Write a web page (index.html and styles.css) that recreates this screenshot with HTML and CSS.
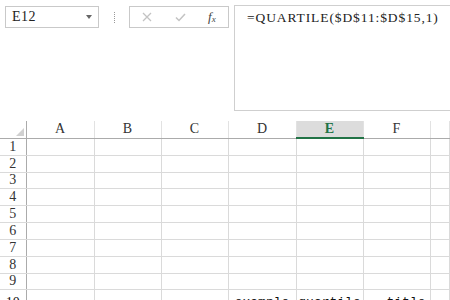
FILE: index.html
```html
<!DOCTYPE html>
<html lang="en">
<head>
    <meta charset="UTF-8">
    <title>Sheet</title>
    <link rel="stylesheet" href="styles.css">
</head>
<body>
    <!-- Bar di atas: name box, tombol, formula -->
    <div class="top">
        <div class="namebox">
            <span>E12</span>
            <span class="arrow"></span>
        </div>
        <div class="dots"></div>
        <div class="btns">
            <svg width="10" height="10" viewBox="0 0 10 10"><path d="M1 1L9 9M9 1L1 9" stroke="#c3c3c3" stroke-width="1.3" fill="none"/></svg>
            <svg width="11" height="9" viewBox="0 0 11 9"><path d="M1 4.5L4 7.5L10 1" stroke="#c3c3c3" stroke-width="1.5" fill="none"/></svg>
            <span class="fx">f<sub>x</sub></span>
        </div>
        <div class="formula">=QUARTILE($D$11:$D$15,1)</div>
    </div>

    <!-- Lembar kerja -->
    <table class="sheet">
        <colgroup>
            <col style="width:26px"><col style="width:68px"><col style="width:67px"><col style="width:67px">
            <col style="width:68px"><col style="width:67px"><col style="width:67px"><col>
        </colgroup>
        <tr class="head">
            <th class="corner"><svg width="8" height="8" viewBox="0 0 8 8"><polygon points="8,0 8,8 0,8" fill="#d0d0d0"/></svg></th>
            <th>A</th><th>B</th><th>C</th><th>D</th><th class="active">E</th><th>F</th><th></th>
        </tr>
        <tr class="r17"><th>1</th><td></td><td></td><td></td><td></td><td></td><td></td><td></td></tr>
        <tr class="r17"><th>2</th><td></td><td></td><td></td><td></td><td></td><td></td><td></td></tr>
        <tr class="r16"><th>3</th><td></td><td></td><td></td><td></td><td></td><td></td><td></td></tr>
        <tr class="r17"><th>4</th><td></td><td></td><td></td><td></td><td></td><td></td><td></td></tr>
        <tr class="r17"><th>5</th><td></td><td></td><td></td><td></td><td></td><td></td><td></td></tr>
        <tr class="r17"><th>6</th><td></td><td></td><td></td><td></td><td></td><td></td><td></td></tr>
        <tr class="r17"><th>7</th><td></td><td></td><td></td><td></td><td></td><td></td><td></td></tr>
        <tr class="r17"><th>8</th><td></td><td></td><td></td><td></td><td></td><td></td><td></td></tr>
        <tr class="r16"><th>9</th><td></td><td></td><td></td><td></td><td></td><td></td><td></td></tr>
        <tr class="big">
            <th>10</th><td></td><td></td><td></td>
            <td class="c">example</td><td class="c">quartile</td><td class="rt">title</td><td></td>
        </tr>
    </table>
</body>
</html>
```

FILE: styles.css
```css
/* CSS */
* {
    box-sizing: border-box;
}

body {
    margin: 0;
    background: #fff;
    font-family: "Liberation Serif", serif;
    color: #333;
    overflow: hidden;
    width: 450px;
    height: 300px;
}

.top {
    display: flex;
    align-items: flex-start;
    height: 121px;
}

.namebox {
    margin: 6px 0 0 5px;
    width: 94px;
    height: 22px;
    border: 1px solid #c9c9c9;
    display: flex;
    align-items: center;
    justify-content: space-between;
    padding: 0 6px 0 6px;
    font-size: 14px;
    letter-spacing: 0.5px;
    color: #222;
}

.arrow {
    width: 0;
    height: 0;
    border-left: 3px solid transparent;
    border-right: 3px solid transparent;
    border-top: 4px solid #666;
}

.dots {
    width: 30px;
    height: 22px;
    margin-top: 6px;
    display: flex;
    justify-content: center;
    align-items: center;
}

.dots::before {
    content: "";
    width: 0;
    height: 11px;
    border-left: 1px dotted #999;
}

.btns {
    margin-top: 6px;
    width: 100px;
    height: 22px;
    border: 1px solid #c9c9c9;
    display: flex;
    align-items: center;
    padding: 0 6px 0 12px;
    gap: 23px;
}

.fx {
    font-style: italic;
    font-size: 13px;
    color: #444;
    margin-left: -1px;
}

.fx sub {
    font-size: 9px;
    vertical-align: -1px;
}

.formula {
    margin: 5px 0 0 5px;
    flex: 1;
    height: 106px;
    border: 1px solid #cfcfcf;
    border-right: none;
    padding: 4px 0 0 12px;
    font-size: 13.5px;
    letter-spacing: 0.9px;
    color: #222;
}

.sheet {
    border-collapse: collapse;
    table-layout: fixed;
    width: 450px;
}

.sheet th,
.sheet td {
    padding: 0;
    border-right: 1px solid #dadada;
    border-bottom: 1px solid #dadada;
    overflow: hidden;
    white-space: nowrap;
}

.sheet th {
    font-weight: normal;
    font-size: 14px;
    color: #333;
    text-align: center;
}

.head th {
    height: 17px;
    border-bottom: 1px solid #ababab;
    border-right-color: #e2e2e2;
    line-height: 14px;
}

.head .corner {
    text-align: right;
    vertical-align: bottom;
    padding: 0 2px 2px 0;
    line-height: 0;
}

.head .active {
    background: #dcdcdc;
    color: #217346;
    font-weight: bold;
    border-bottom: 2px solid #217346;
}

.sheet tr th:first-child {
    border-right: 1px solid #ababab;
}

.r17 th, .r17 td { height: 17px; line-height: 15px; }
.r16 th, .r16 td { height: 16px; line-height: 14px; }

.big th,
.big td {
    height: 24px;
    vertical-align: top;
    padding-top: 5px;
    font-family: "Liberation Mono", monospace;
    font-size: 13px;
    color: #111;
}

.big th {
    font-family: "Liberation Serif", serif;
    font-size: 14px;
}

.big .c {
    text-align: center;
}

.big .rt {
    text-align: right;
    padding-right: 4px;
}
```
